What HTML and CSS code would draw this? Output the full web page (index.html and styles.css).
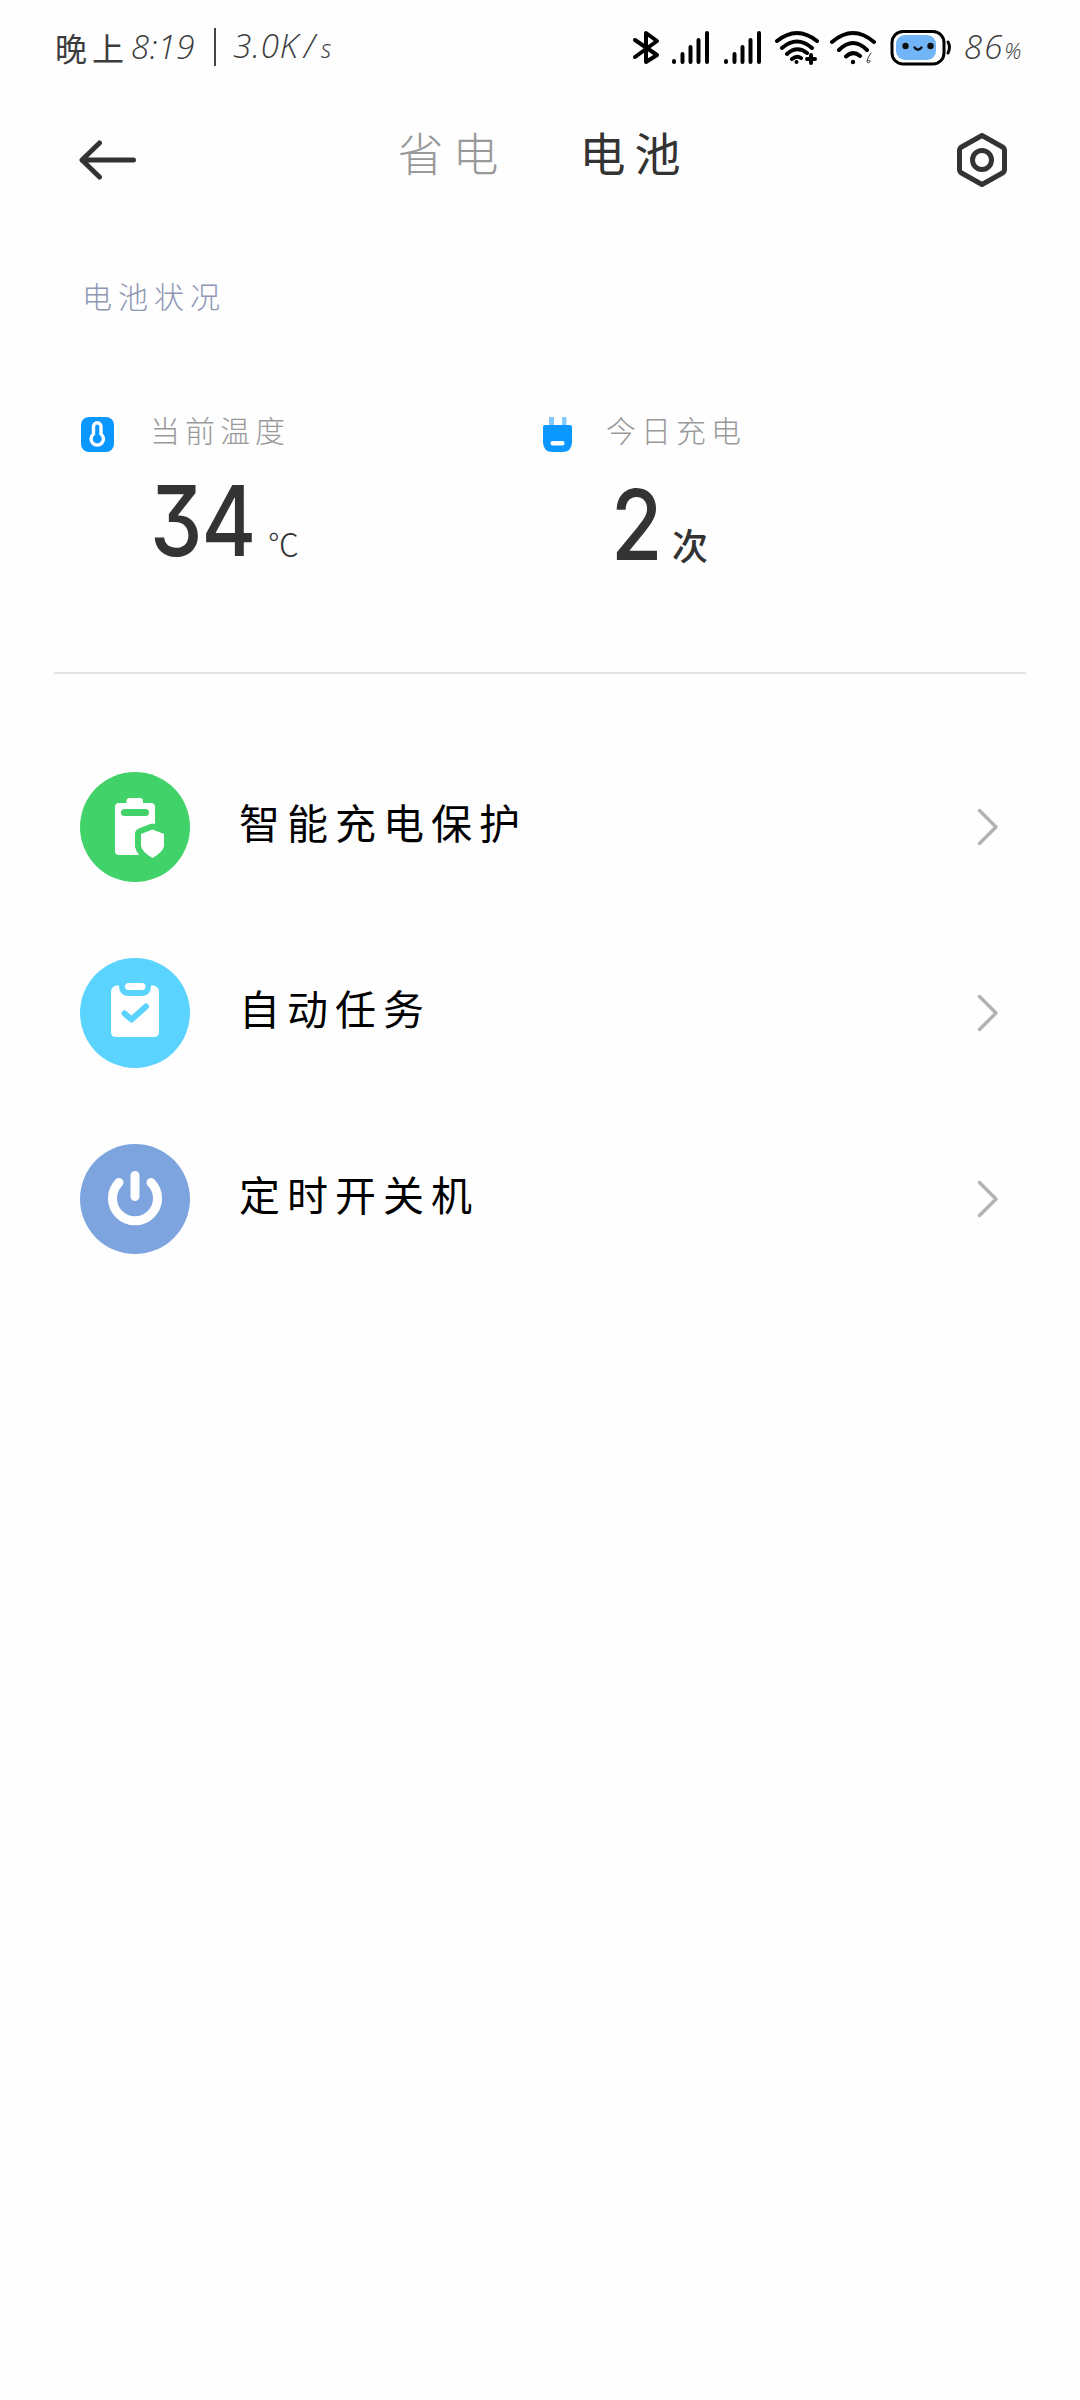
FILE: index.html
```html
<!DOCTYPE html>
<html lang="zh-CN">
  <head>
    <meta charset="UTF-8" />
    <meta name="viewport" content="width=device-width, initial-scale=1.0" />
    <title>电池</title>
    <link rel="stylesheet" href="styles.css">
  </head>
  <body>
    <div class="status-bar">
      <div class="status-left">
        <span class="status-cn">晚上</span>
        <span class="clock">8:19</span>
        <span class="separator"></span>
        <span class="speed">3.0K<span class="slash">/</span><small>s</small></span>
      </div>
      <svg class="status-icons" width="334" height="40" viewBox="0 0 334 40" fill="none" stroke="#000" stroke-linecap="round" stroke-linejoin="round">
        <!-- bluetooth -->
        <path d="M3 12L25 27L14 34V5L25 13L3 29" stroke-width="4" />
        <!-- signal -->
        <path d="M42 33V34M50.500 26V34M58.500 19V34M66.500 12V34M75 5V34" stroke-width="4" />
        <path d="M94 33V34M102.500 26V34M110.500 19V34M118.500 12V34M127 5V34" stroke-width="4" />
        <!-- wifi + -->
        <path d="M145 13Q165 -3 185 13M150 20Q165 7 180 20M155 26Q165 17 175 25M160 31Q165 27 169 30" stroke-width="4" />
        <circle cx="164.500" cy="34" r="2" fill="#000" stroke="none" />
        <path d="M179 27V35M175 31H183" stroke-width="4" />
        <!-- wifi 6 -->
        <path d="M200 14Q221 -4 242 14M207 22Q221 8 235 22M214 28.500Q221 22 228 28" stroke-width="4" />
        <circle cx="221" cy="34" r="2.200" fill="#000" stroke="none" />
        <path d="M239 25Q235 30 235 34Q236 36 238 34Q239 31 235 33" stroke="#444" stroke-width="1" />
        <!-- battery face -->
        <rect x="260" y="3.500" width="52" height="32.500" rx="11" stroke-width="3" />
        <rect x="264" y="7" width="40" height="25" rx="9" fill="#72b5f7" stroke="none" />
        <circle cx="273.500" cy="18" r="3.200" fill="#111" stroke="none" />
        <circle cx="298.500" cy="18" r="3.200" fill="#111" stroke="none" />
        <path d="M282.500 19.500Q286 24 289.500 19.500" stroke="#111" stroke-width="2.300" />
        <path d="M316 14Q319 19 316 25" stroke-width="3" />
      </svg>
      <div class="battery-level"><span>86</span><small>%</small></div>
    </div>

    <header class="header">
      <svg class="back" width="60" height="42" viewBox="0 0 60 42" fill="none" stroke="#333" stroke-width="5" stroke-linecap="round" stroke-linejoin="round">
        <path d="M54.500 21H3M20.500 4L3 21L20.500 38" />
      </svg>
      <nav class="tabs">
        <span class="tab">省电</span>
        <span class="tab active">电池</span>
      </nav>
      <svg class="settings" width="52" height="56" viewBox="0 0 52 56" fill="none" stroke="#333" stroke-width="5" stroke-linejoin="round">
        <path d="M26 3.500L46.500 15Q48.500 16 48.500 19V37Q48.500 40 46.500 41L26 52.500L5.500 41Q3.500 40 3.500 37V19Q3.500 16 5.500 15Z" />
        <circle cx="26" cy="28" r="9.500" />
      </svg>
    </header>

    <section class="condition">
      <h2>电池状况</h2>
      <div class="stats">
        <div class="stat">
          <svg class="stat-icon" width="34" height="36" viewBox="0 0 34 36">
            <rect x="1" y="1" width="33" height="35" rx="8" fill="#0a97ff" />
            <path d="M13.500 10.500A3.700 3.700 0 0 1 21 10.500V18A6.200 6.200 0 1 1 13.500 18Z" fill="none" stroke="#fff" stroke-width="3.400" />
          </svg>
          <div>
            <p class="label">当前温度</p>
            <p class="value"><span class="num">34</span><span class="unit degree">℃</span></p>
          </div>
        </div>
        <div class="stat today">
          <svg class="stat-icon" width="34" height="36" viewBox="0 0 34 36">
            <path d="M8 1H13V10H8ZM21 1H25.500V10H21Z" fill="#85caff" />
            <path d="M4 9H29Q31 9 31 11V26Q31 36 21 36H12Q2 36 2 26V11Q2 9 4 9Z" fill="#0a97ff" />
            <rect x="9.500" y="25" width="14" height="4.500" rx="2" fill="#fff" />
          </svg>
          <div>
            <p class="label">今日充电</p>
            <p class="value"><span class="num">2</span><span class="unit">次</span></p>
          </div>
        </div>
      </div>
    </section>

    <main class="menu">
      <div class="menu-item">
        <svg class="menu-icon" width="110" height="110" viewBox="0 0 110 110">
          <circle cx="55" cy="55" r="55" fill="#41d36a" />
          <path d="M39 31H46.500V29Q46.500 26 49.500 26H60Q63 26 63 29V31H71Q75 31 75 35V79Q75 83 71 83H39Q35 83 35 79V35Q35 31 39 31Z" fill="#fff" />
          <rect x="41" y="37" width="28" height="7" rx="3.500" fill="#41d36a" />
          <path d="M72.500 57.500L84 62V74Q83 80 72.500 86Q62 80 61 74V62Z" fill="#41d36a" stroke="#41d36a" stroke-width="12" stroke-linejoin="round" />
          <path d="M72.500 57.500L84 62V74Q83 80 72.500 86Q62 80 61 74V62Z" fill="#fff" />
        </svg>
        <span class="menu-text">智能充电保护</span>
        <svg class="arrow" width="24" height="40" viewBox="0 0 24 40"><path d="M3.500 3.500L20 20L3.500 36.500" /></svg>
      </div>
      <div class="menu-item">
        <svg class="menu-icon" width="110" height="110" viewBox="0 0 110 110">
          <circle cx="55" cy="55" r="55" fill="#5ad3ff" />
          <path d="M36 27.500H39Q39 38 48 38H62Q71 38 71 27.500H74Q79 29 79 34V74Q79 79 74 79H36Q31 79 31 74V34Q31 29 36 27.500Z" fill="#fff" />
          <rect x="45" y="25" width="20.500" height="7" rx="3.500" fill="#fff" />
          <path d="M44.500 55.500L51.500 61.500L66 48.500" fill="none" stroke="#5ad3ff" stroke-width="6" stroke-linecap="round" stroke-linejoin="round" />
        </svg>
        <span class="menu-text">自动任务</span>
        <svg class="arrow" width="24" height="40" viewBox="0 0 24 40"><path d="M3.500 3.500L20 20L3.500 36.500" /></svg>
      </div>
      <div class="menu-item">
        <svg class="menu-icon" width="110" height="110" viewBox="0 0 110 110">
          <circle cx="55" cy="55" r="55" fill="#7da4df" />
          <path d="M39 38.500A22.500 22.500 0 1 0 71 38.500M55 31.500V52.500" fill="none" stroke="#fff" stroke-width="9" stroke-linecap="round" />
        </svg>
        <span class="menu-text">定时开关机</span>
        <svg class="arrow" width="24" height="40" viewBox="0 0 24 40"><path d="M3.500 3.500L20 20L3.500 36.500" /></svg>
      </div>
    </main>
  </body>
</html>
```
FILE: styles.css
```css
* {
  margin: 0;
  padding: 0;
  box-sizing: border-box;
}

body {
  min-height: 2400px;
  font-family: "Noto Sans CJK SC", sans-serif;
  font-weight: 300;
  color: #333;
  background-color: #fefefe;
}

svg {
  display: block;
  flex-shrink: 0;
}

/* STATUS BAR */
.status-bar {
  height: 96px;
  padding-left: 55px;
  display: flex;
  align-items: center;
  font-size: 33px;
  line-height: 40px;
  color: #3c3c3c;
}

.status-left {
  width: 577px;
  margin-top: -3px;
  display: flex;
  align-items: center;
}

.status-cn {
  width: 76px;
  letter-spacing: 5px;
  font-size: 32px;
  font-weight: 400;
}

.clock,
.speed,
.battery-level {
  font-family: "Open Sans", sans-serif;
  font-style: italic;
}

.clock {
  width: 69px;
  letter-spacing: 0.5px;
}

.separator {
  width: 2px;
  height: 38px;
  margin: 0 17px 0 14px;
  background-color: #444;
}

.speed {
  letter-spacing: 1px;
}

.slash {
  margin: 0 5px;
}

.speed small {
  font-size: 25px;
}

.battery-level {
  margin-left: -2px;
  letter-spacing: 2px;
}

.battery-level small {
  font-size: 22px;
}

/* HEADER */
.header {
  height: 128px;
  padding: 0 72px 0 79px;
  display: flex;
  align-items: center;
  justify-content: space-between;
}

.tabs {
  display: flex;
  gap: 72px;
  margin: -18px 0 0 -8px;
  font-size: 46px;
  line-height: 60px;
  letter-spacing: 9px;
}

.tab {
  color: #999;
}

.tab.active {
  font-weight: 400;
  color: #333;
}

/* BATTERY CONDITION */
.condition {
  height: 450px;
  margin: 0 54px;
  padding: 51px 26px 0;
  border-bottom: 2px solid #e3e3e3;
}

.condition h2 {
  font-size: 30px;
  font-weight: 300;
  line-height: 40px;
  letter-spacing: 6px;
  color: #8e97b5;
  padding-left: 2px;
}

.stats {
  display: grid;
  grid-template-columns: 461px 1fr;
  margin-top: 94px;
}

.stat {
  display: flex;
  gap: 36px;
}

.stat-icon {
  margin-top: 7px;
}

.label {
  font-size: 30px;
  line-height: 40px;
  letter-spacing: 5px;
  color: #999;
}

.today .label {
  margin-left: -5px;
}

.value {
  display: flex;
  align-items: baseline;
  margin-top: 12px;
  line-height: 120px;
}

.today .value {
  margin-top: 16px;
}

.num {
  width: 118px;
  font-family: Inter, sans-serif;
  font-size: 97px;
  font-weight: 500;
  letter-spacing: -1px;
  font-feature-settings: "cv09";
  transform: scaleX(0.86);
  transform-origin: left;
}

.today .num {
  width: 61px;
}

.unit {
  font-size: 36px;
  font-weight: 500;
}

.degree {
  font-size: 31px;
  font-weight: 300;
}

/* MENU */
.menu {
  padding: 60px 80px 0;
}

.menu-item {
  height: 186px;
  display: flex;
  align-items: center;
}

.menu-text {
  flex: 1;
  margin: -13px 0 0 49px;
  font-size: 41px;
  font-weight: 400;
  line-height: 60px;
  letter-spacing: 7px;
  color: #000;
}

.arrow {
  fill: none;
  stroke: #b3b3b3;
  stroke-width: 3.5;
  stroke-linecap: round;
  stroke-linejoin: round;
}
```
